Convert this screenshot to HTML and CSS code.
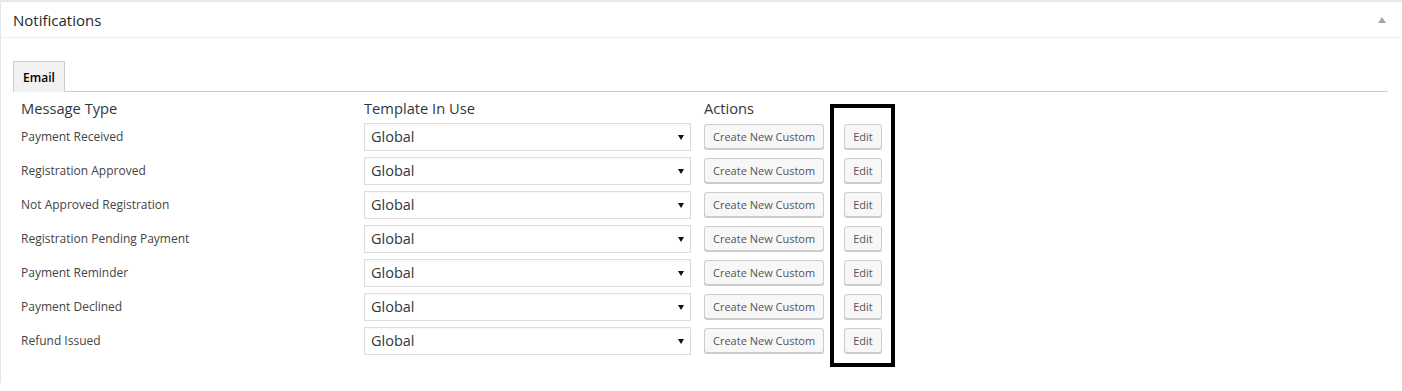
FILE: index.html
```html
<!DOCTYPE html>
<html>
<head>
<meta charset="utf-8">
<link rel="stylesheet" href="styles.css">
</head>
<body>
<div class="panel">
  <div class="panel-head">
    <h2 class="panel-title">Notifications</h2>
    <span class="toggle"></span>
  </div>
  <div class="tabs">
    <span class="tab">Email</span>
  </div>
  <div class="grid">
    <div class="th">Message Type</div>
    <div class="th">Template In Use</div>
    <div class="th">Actions</div>

    <div class="cell label">Payment Received</div>
    <div class="cell"><div class="select-wrap"><select class="select"><option>Global</option></select></div></div>
    <div class="cell actions"><button class="btn">Create New Custom</button><button class="btn">Edit</button></div>

    <div class="cell label">Registration Approved</div>
    <div class="cell"><div class="select-wrap"><select class="select"><option>Global</option></select></div></div>
    <div class="cell actions"><button class="btn">Create New Custom</button><button class="btn">Edit</button></div>

    <div class="cell label">Not Approved Registration</div>
    <div class="cell"><div class="select-wrap"><select class="select"><option>Global</option></select></div></div>
    <div class="cell actions"><button class="btn">Create New Custom</button><button class="btn">Edit</button></div>

    <div class="cell label">Registration Pending Payment</div>
    <div class="cell"><div class="select-wrap"><select class="select"><option>Global</option></select></div></div>
    <div class="cell actions"><button class="btn">Create New Custom</button><button class="btn">Edit</button></div>

    <div class="cell label">Payment Reminder</div>
    <div class="cell"><div class="select-wrap"><select class="select"><option>Global</option></select></div></div>
    <div class="cell actions"><button class="btn">Create New Custom</button><button class="btn">Edit</button></div>

    <div class="cell label">Payment Declined</div>
    <div class="cell"><div class="select-wrap"><select class="select"><option>Global</option></select></div></div>
    <div class="cell actions"><button class="btn">Create New Custom</button><button class="btn">Edit</button></div>

    <div class="cell label">Refund Issued</div>
    <div class="cell"><div class="select-wrap"><select class="select"><option>Global</option></select></div></div>
    <div class="cell actions"><button class="btn">Create New Custom</button><button class="btn">Edit</button></div>
  </div>
</div>
<div class="highlight"></div>
</body>
</html>
```

FILE: styles.css
```css
html, body {
  margin: 0;
  padding: 0;
  background: #fff;
}
body {
  font-family: "Open Sans", "Noto Sans", sans-serif;
  color: #32373c;
  position: relative;
  width: 1402px;
  height: 391px;
  overflow: hidden;
}
.panel {
  border-top: 2px solid #e8e8e8;
  border-left: 1px solid #e5e5e5;
  height: 383px;
  box-sizing: border-box;
}
.panel-head {
  height: 35px;
  border-bottom: 1px solid #eeeeee;
  display: flex;
  align-items: center;
  justify-content: space-between;
  padding: 0 16px 0 12px;
}
.panel-title {
  margin: 0;
  font-size: 15px;
  font-weight: 400;
  color: #23282d;
  line-height: 20px;
}
.toggle {
  width: 0;
  height: 0;
  border-left: 4px solid transparent;
  border-right: 4px solid transparent;
  border-bottom: 6px solid #a0a5aa;
  margin-top: 1px;
}
.tabs {
  margin: 23px 14px 0 12px;
  border-bottom: 1px solid #cccccc;
  display: flex;
  height: 30px;
}
.tab {
  box-sizing: border-box;
  width: 52px;
  height: 31px;
  border: 1px solid #cccccc;
  border-bottom: none;
  background: #f1f1f1;
  font-size: 12px;
  font-weight: 600;
  color: #000;
  display: flex;
  align-items: center;
  justify-content: center;
  padding-top: 1px;
}
.grid {
  display: grid;
  grid-template-columns: 343px 340px auto;
  grid-auto-rows: 34px;
  grid-template-rows: 22px;
  margin: 6px 0 0 20px;
}
.th {
  font-size: 14.7px;
  line-height: 20px;
  color: #32373c;
}
.cell {
  display: flex;
  align-items: center;
}
.label {
  font-size: 12px;
  color: #444;
  padding-bottom: 1px;
}
.select-wrap {
  position: relative;
  width: 327px;
}
.select-wrap::after {
  content: "";
  position: absolute;
  right: 7px;
  top: 12px;
  border-left: 3px solid transparent;
  border-right: 3px solid transparent;
  border-top: 5px solid #111;
  pointer-events: none;
}
.select {
  -webkit-appearance: none;
  appearance: none;
  width: 327px;
  height: 28px;
  box-sizing: border-box;
  border: 1px solid #dddddd;
  border-radius: 0;
  background: #fff;
  font-family: "Open Sans", "Noto Sans", sans-serif;
  font-size: 14.5px;
  color: #32373c;
  padding: 0 0 1px 6px;
  margin: 0;
  box-shadow: inset 0 1px 2px rgba(0,0,0,0.04);
}
.actions {
  gap: 20px;
}
.btn {
  height: 25px;
  box-sizing: border-box;
  border: 1px solid #cccccc;
  border-radius: 3px;
  background: #f7f7f7;
  box-shadow: 0 1px 0 #cccccc;
  font-family: "Open Sans", "Noto Sans", sans-serif;
  font-size: 11px;
  color: #555;
  padding: 0 8px;
  margin: 0 0 1px 0;
  line-height: 23px;
}
.highlight {
  position: absolute;
  left: 830px;
  top: 104px;
  width: 65px;
  height: 263px;
  box-sizing: border-box;
  border: 4px solid #000;
}
```
